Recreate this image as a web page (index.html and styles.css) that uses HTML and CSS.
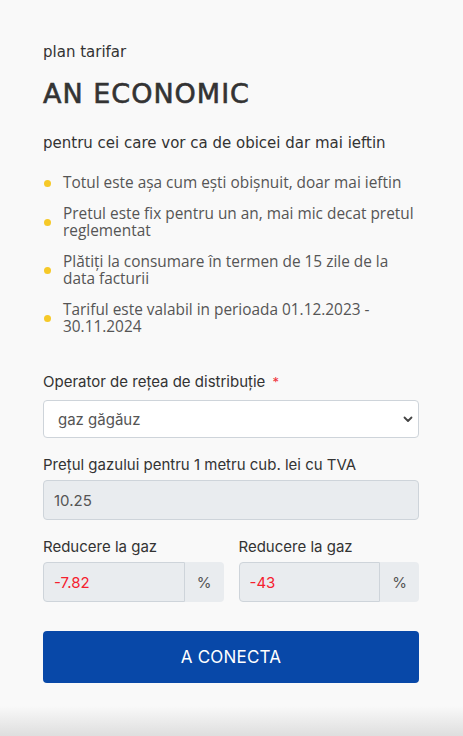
FILE: index.html
```html
<!DOCTYPE html>
<html lang="ro">
<head>
    <meta charset="UTF-8">
    <meta name="viewport" content="width=device-width, initial-scale=1.0">
    <title>An Economic</title>
    <link rel="stylesheet" href="styles.css">
</head>
<body>
    <div class="tariff">
        <p class="plan">plan tarifar</p>
        <h1 class="title">AN ECONOMIC</h1>
        <p class="subtitle">pentru cei care vor ca de obicei dar mai ieftin</p>
        <ul class="benefits">
            <li>Totul este așa cum ești obișnuit, doar mai ieftin</li>
            <li>Pretul este fix pentru un an, mai mic decat pretul reglementat</li>
            <li>Plătiți la consumare în termen de 15 zile de la data facturii</li>
            <li>Tariful este valabil in perioada 01.12.2023 - 30.11.2024</li>
        </ul>

        <form class="calc">
            <div class="field">
                <label for="operator" class="first">Operator de rețea de distribuție <span class="req">*</span></label>
                <div class="select-wrap">
                    <select id="operator">
                        <option>gaz găgăuz</option>
                    </select>
                    <svg class="chevron" width="10" height="7" viewBox="0 0 10 7">
                        <path d="M1.5 1.5 L5 5 L8.5 1.5" fill="none" stroke="#444" stroke-width="1.8" stroke-linecap="round" stroke-linejoin="round"/>
                    </svg>
                </div>
            </div>
            <div class="field">
                <label for="price">Prețul gazului pentru 1 metru cub. lei cu TVA</label>
                <input id="price" class="input" type="text" value="10.25" disabled>
            </div>
            <div class="row">
                <div class="field">
                    <label>Reducere la gaz</label>
                    <div class="group">
                        <input class="input minus" type="text" value="-7.82" disabled>
                        <span class="addon">%</span>
                    </div>
                </div>
                <div class="field">
                    <label>Reducere la gaz</label>
                    <div class="group">
                        <input class="input minus" type="text" value="-43" disabled>
                        <span class="addon">%</span>
                    </div>
                </div>
            </div>
            <button type="button" class="connect">A CONECTA</button>
        </form>
    </div>
    <div class="fade"></div>
</body>
</html>
```

FILE: styles.css
```css
body {
    margin: 0;
    background: #f9f9f9;
    font-family: Inter, "Liberation Sans", sans-serif;
    color: #333;
    height: 736px;
    overflow: hidden;
    display: flex;
    flex-direction: column;
}

.tariff {
    padding: 43px 44px 0 43px;
    flex: 1;
}

.plan {
    margin: 0;
    font-family: "DejaVu Sans", sans-serif;
    font-size: 15px;
    line-height: 18px;
    color: #333;
}

.title {
    margin: 16px 0 0;
    font-family: "DejaVu Sans", sans-serif;
    font-size: 27px;
    font-weight: normal;
    -webkit-text-stroke: 0.6px #333;
    line-height: 34px;
    color: #333;
    letter-spacing: 1px;
}

.subtitle {
    margin: 22px 0 0;
    font-family: "DejaVu Sans", sans-serif;
    font-size: 15px;
    line-height: 20px;
    color: #333;
}

.benefits {
    list-style: none;
    margin: 21px 0 0;
    padding: 0;
    font-family: "Open Sans", sans-serif;
    font-size: 15.4px;
    line-height: 17px;
    color: #555;
}

.benefits li {
    position: relative;
    padding-left: 20px;
    margin-bottom: 14px;
}

.benefits li::before {
    content: "";
    position: absolute;
    left: 1px;
    top: 50%;
    width: 7px;
    height: 7px;
    margin-top: -3px;
    border-radius: 50%;
    background: #f6c928;
}

.calc {
    margin-top: 37px;
}

.field {
    margin-bottom: 17px;
}

.field label {
    display: block;
    font-size: 15px;
    line-height: 20px;
    margin-bottom: 5px;
    color: #333;
}

.field label.first {
    margin-bottom: 8px;
}

.req {
    color: #f0303a;
    font-size: 13px;
    vertical-align: top;
    margin-left: 3px;
}

.select-wrap {
    position: relative;
}

.select-wrap select {
    appearance: none;
    -webkit-appearance: none;
    display: block;
    width: 100%;
    height: 38px;
    padding: 0 30px 0 14px;
    font-family: inherit;
    font-size: 15px;
    color: #555;
    background: #fff;
    border: 1px solid #ced4da;
    border-radius: 4px;
}

.chevron {
    position: absolute;
    right: 6px;
    top: 16px;
    pointer-events: none;
}

.input {
    display: block;
    box-sizing: border-box;
    width: 100%;
    height: 40px;
    padding: 0 10px;
    font-family: inherit;
    font-size: 15px;
    color: #555;
    background: #e9ecef;
    border: 1px solid #ced4da;
    border-radius: 4px;
}

.row {
    display: grid;
    grid-template-columns: 1fr 1fr;
    gap: 15px;
}

.group {
    display: flex;
}

.group .input {
    flex: 1;
    min-width: 0;
    border-radius: 4px 0 0 4px;
}

.input.minus {
    color: #f5202e;
    -webkit-text-fill-color: #f5202e;
}

.addon {
    width: 39px;
    display: flex;
    align-items: center;
    justify-content: center;
    background: #e9ecef;
    border-radius: 0 4px 4px 0;
    font-size: 15px;
    color: #555;
}

.row .field {
    margin-bottom: 29px;
}

.connect {
    display: block;
    width: 100%;
    height: 52px;
    background: #0848a8;
    color: #fff;
    border: none;
    border-radius: 4px;
    font-family: Inter, "Liberation Sans", sans-serif;
    font-size: 17px;
    letter-spacing: 0.2px;
}

.fade {
    height: 30px;
    background: linear-gradient(#f9f9f9, #dedede);
}
```
